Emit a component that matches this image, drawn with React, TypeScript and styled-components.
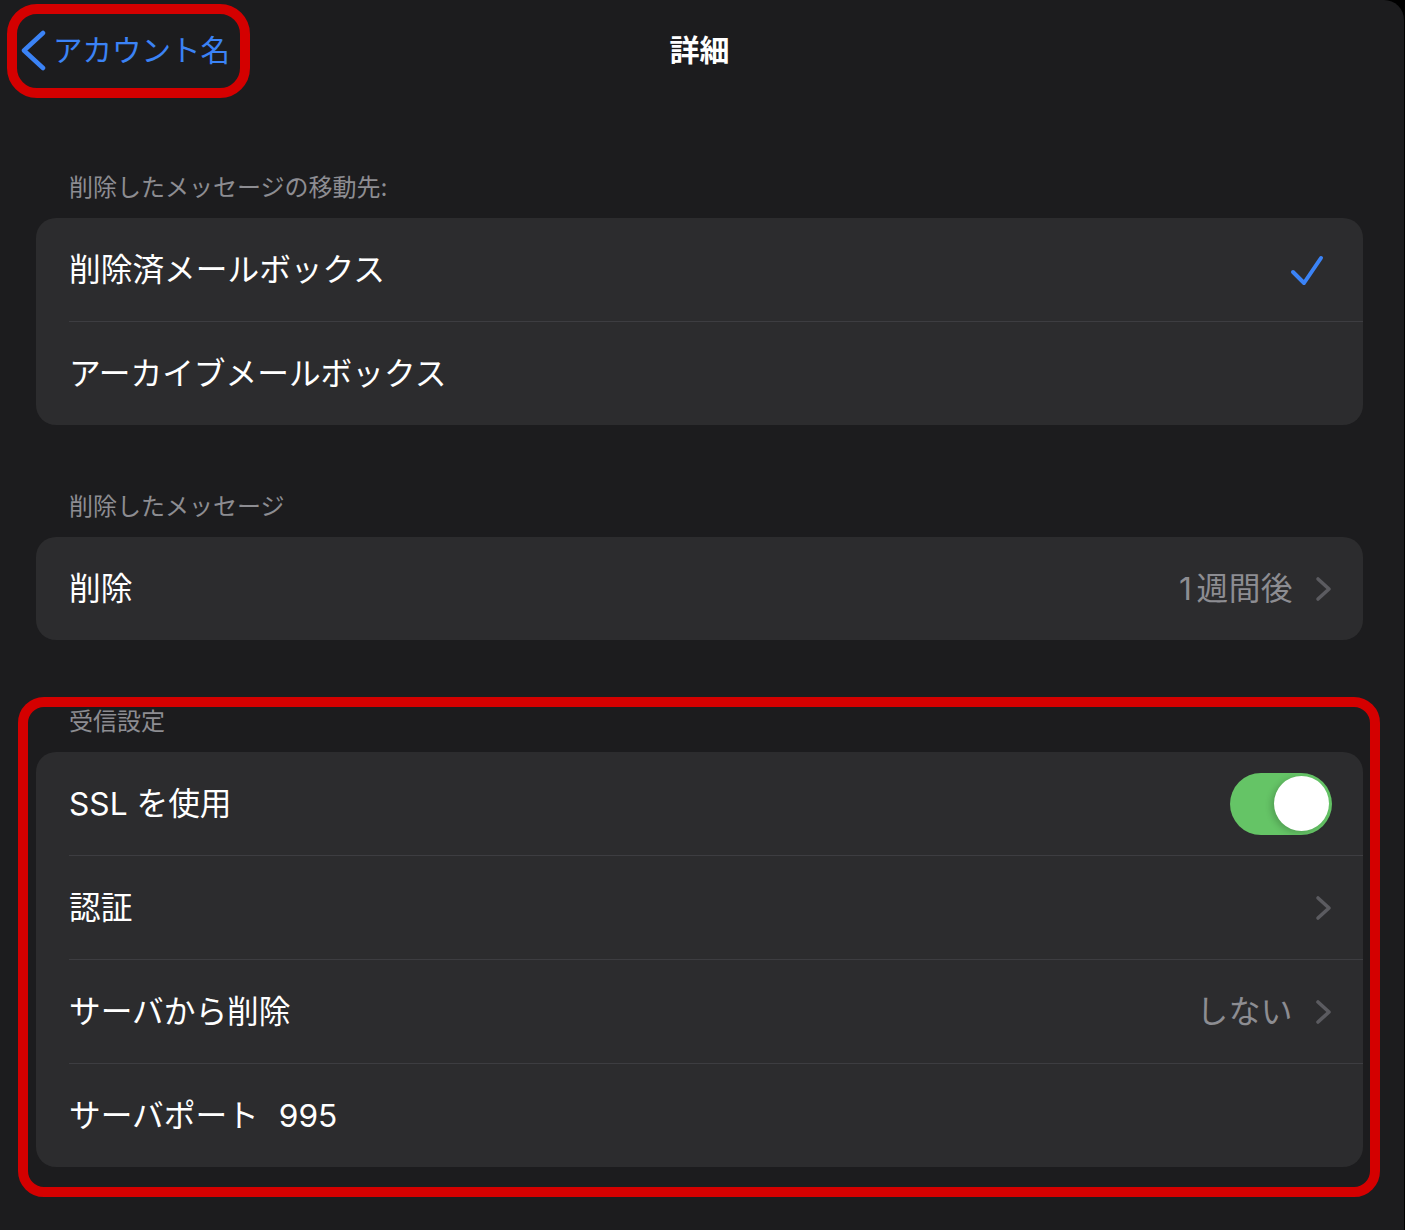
import React from "react";
import styled, { createGlobalStyle } from "styled-components";

const GlobalStyle = createGlobalStyle`
  html, body { margin: 0; padding: 0; background: #000; }
  body { font-family: Inter, "Noto Sans CJK JP", sans-serif; -webkit-font-smoothing: antialiased; }
  * { box-sizing: border-box; }
`;

const Screen = styled.div`
  position: relative;
  width: 1404px;
  height: 1230px;
  background: #1c1c1e;
  border-top-right-radius: 20px;
  overflow: hidden;
  font-family: Inter, "Noto Sans CJK JP", sans-serif;
`;

const Nav = styled.div`
  height: 100px;
  display: grid;
  grid-template-columns: 1fr auto 1fr;
  align-items: center;
  padding: 0 22px 0 22px;
`;

const BackButton = styled.div`
  display: flex;
  align-items: center;
  gap: 6px;
  color: #3b83f6;
  font-size: 29.5px;
  line-height: 40px;
  justify-self: start;
`;

const Title = styled.div`
  color: #fff;
  font-size: 30px;
  font-weight: 700;
  line-height: 40px;
  text-align: center;
  margin-left: -5px;
`;

const Content = styled.div`
  display: flex;
  flex-direction: column;
  gap: 67px;
  padding: 73px 41px 0 36px;
`;

const Section = styled.section`
  display: flex;
  flex-direction: column;
  gap: 15px;
`;

const SectionHeader = styled.div`
  color: #8d8d92;
  font-size: 24px;
  line-height: 30px;
  padding-left: 33px;
`;

const Card = styled.div`
  background: #2c2c2e;
  border-radius: 20px;
  overflow: hidden;
`;

const Row = styled.div<{ $divider?: boolean }>`
  height: ${(p) => (p.$divider ? "104px" : "103px")};
  margin-left: 33px;
  padding-right: 30px;
  display: flex;
  align-items: center;
  border-bottom: ${(p) => (p.$divider ? "1px solid #3d3d41" : "none")};
`;

const Label = styled.div`
  flex: 1;
  color: #fff;
  font-size: 31.7px;
  line-height: 40px;
  display: flex;
  align-items: center;
  gap: 20px;
`;

const Value = styled.div`
  color: #8d8d92;
  font-size: 31.7px;
  line-height: 40px;
  margin-right: 21px;
  letter-spacing: 0.5px;
`;

const Digit = styled.span`
  margin-right: 4px;
`;

const Toggle = styled.div<{ $on: boolean }>`
  position: relative;
  width: 102px;
  height: 62px;
  border-radius: 31px;
  background: ${(p) => (p.$on ? "#65c466" : "#39393d")};
  margin-right: 1px;
`;

const Knob = styled.div<{ $on: boolean }>`
  position: absolute;
  top: 3.5px;
  left: ${(p) => (p.$on ? "44px" : "3.5px")};
  width: 55px;
  height: 55px;
  border-radius: 50%;
  background: #fff;
  box-shadow: -3px 2px 6px rgba(0, 0, 0, 0.18);
`;

const Highlight = styled.div<{ $radius: number }>`
  position: absolute;
  border: 10px solid #d40000;
  border-radius: ${(p) => p.$radius}px;
  pointer-events: none;
`;

const BackChevron = () => (
  <svg width="27" height="41" viewBox="0 0 27 41" style={{ marginLeft: -2 }}>
    <path d="M23 3 L4 20.5 L23 38" fill="none" stroke="#3b83f6" strokeWidth="4.5" strokeLinecap="round" strokeLinejoin="round" />
  </svg>
);

const Check = () => (
  <svg width="35" height="32" viewBox="0 0 35 32" style={{ marginRight: 8 }}>
    <path d="M3 18 L14 29 L31 4" fill="none" stroke="#3b83f6" strokeWidth="4" strokeLinecap="round" strokeLinejoin="round" />
  </svg>
);

const Chevron = () => (
  <svg width="19" height="26" viewBox="0 0 19 26">
    <path d="M4 3 L15 13 L4 23" fill="none" stroke="#5b5b60" strokeWidth="3.6" strokeLinecap="round" strokeLinejoin="round" />
  </svg>
);

export default function App() {
  return (
    <>
      <GlobalStyle />
      <Screen>
        <Nav>
          <BackButton>
            <BackChevron />
            <span>アカウント名</span>
          </BackButton>
          <Title>詳細</Title>
          <div />
        </Nav>
        <Content>
          <Section>
            <SectionHeader>削除したメッセージの移動先:</SectionHeader>
            <Card>
              <Row $divider>
                <Label>削除済メールボックス</Label>
                <Check />
              </Row>
              <Row>
                <Label>アーカイブメールボックス</Label>
              </Row>
            </Card>
          </Section>
          <Section>
            <SectionHeader>削除したメッセージ</SectionHeader>
            <Card>
              <Row>
                <Label>削除</Label>
                <Value>
                  <Digit>1</Digit>週間後
                </Value>
                <Chevron />
              </Row>
            </Card>
          </Section>
          <Section>
            <SectionHeader>受信設定</SectionHeader>
            <Card>
              <Row $divider>
                <Label>SSL を使用</Label>
                <Toggle $on>
                  <Knob $on />
                </Toggle>
              </Row>
              <Row $divider>
                <Label>認証</Label>
                <Chevron />
              </Row>
              <Row $divider>
                <Label>サーバから削除</Label>
                <Value>しない</Value>
                <Chevron />
              </Row>
              <Row>
                <Label>
                  <span>サーバポート</span>
                  <span>995</span>
                </Label>
              </Row>
            </Card>
          </Section>
        </Content>
        <Highlight $radius={30} style={{ left: 7, top: 4, width: 243, height: 94 }} />
        <Highlight $radius={26} style={{ left: 18, top: 697, width: 1362, height: 500 }} />
      </Screen>
    </>
  );
}
